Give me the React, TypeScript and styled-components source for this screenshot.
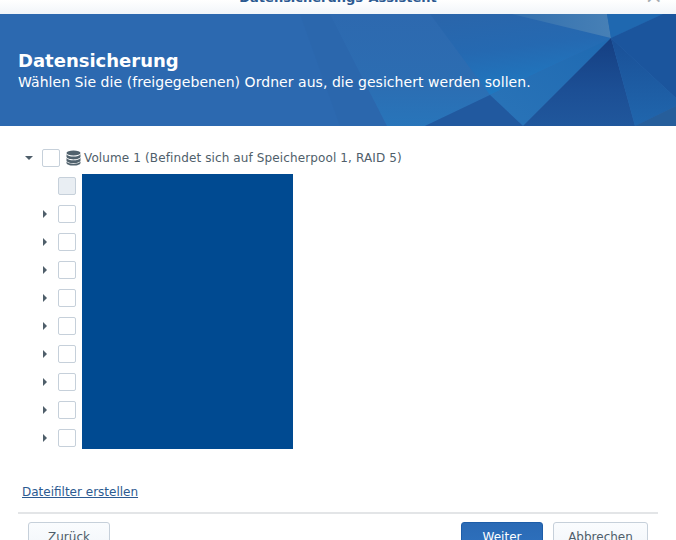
import React from 'react';
import styled, { createGlobalStyle } from 'styled-components';

const FOLDER_ROWS = 9;

const GlobalStyle = createGlobalStyle`
  html, body {
    margin: 0;
    padding: 0;
    background: #fff;
  }
  body {
    width: 676px;
    height: 540px;
    overflow: hidden;
    font-family: "DejaVu Sans", Verdana, sans-serif;
  }
`;

const BannerArt = () => (
  <ArtSvg viewBox="0 0 676 112">
    <defs>
      <linearGradient id="bright" x1="0" y1="0" x2="0.3" y2="1">
        <stop offset="0" stopColor="#2a65aa" />
        <stop offset="0.5" stopColor="#2569b1" />
        <stop offset="1" stopColor="#1f78c0" />
      </linearGradient>
      <linearGradient id="middle" x1="0" y1="0" x2="0" y2="1">
        <stop offset="0" stopColor="#2d69af" />
        <stop offset="0.6" stopColor="#2c6db2" />
        <stop offset="1" stopColor="#2875ba" />
      </linearGradient>
      <linearGradient id="light" x1="0" y1="0" x2="1" y2="0">
        <stop offset="0" stopColor="#3370ae" />
        <stop offset="1" stopColor="#4780b6" />
      </linearGradient>
      <linearGradient id="dark" x1="0" y1="0" x2="0" y2="1">
        <stop offset="0" stopColor="#153f82" />
        <stop offset="0.6" stopColor="#1c4f95" />
        <stop offset="1" stopColor="#20579c" />
      </linearGradient>
      <linearGradient id="side" x1="0" y1="0" x2="0" y2="1">
        <stop offset="0" stopColor="#1a5097" />
        <stop offset="1" stopColor="#2066ad" />
      </linearGradient>
      <linearGradient id="edge" x1="1" y1="0" x2="0" y2="1">
        <stop offset="0" stopColor="#1f6ab2" />
        <stop offset="1" stopColor="#2a74b8" />
      </linearGradient>
    </defs>
    <polygon points="300,0 330,0 387,112 340,112" fill="#2b67ad" />
    <polygon points="330,0 430,0 490,81 425,112 387,112" fill="url(#middle)" />
    <polygon points="430,0 512,0 611,24 490,81" fill="url(#bright)" />
    <polygon points="512,0 607,0 611,24" fill="url(#light)" />
    <polygon points="607,0 663,0 611,24" fill="#1f68b0" />
    <polygon points="663,0 676,0 676,84 611,24" fill="#1b559d" />
    <polygon points="490,81 611,24 523,112" fill="url(#edge)" />
    <polygon points="490,81 523,112 425,112" fill="#21599f" />
    <polygon points="611,24 635,112 523,112" fill="url(#dark)" />
    <polygon points="611,24 676,84 676,92 635,112" fill="url(#side)" />
    <polygon points="635,112 676,92 676,112" fill="#265e9b" />
  </ArtSvg>
);

const DatabaseIcon = () => (
  <svg width="15" height="16" viewBox="0 0 15 16">
    <ellipse cx="7.5" cy="3" rx="7" ry="2.6" fill="#51626d" />
    <path d="M.5 4.2c1 1.6 3.6 2.3 7 2.3s6-.7 7-2.3v2.6c0 1.4-3.1 2.6-7 2.6s-7-1.2-7-2.6z" fill="#51626d" />
    <path d="M.5 8c1 1.6 3.6 2.3 7 2.3s6-.7 7-2.3v2.4c0 1.4-3.1 2.6-7 2.6s-7-1.2-7-2.6z" fill="#51626d" />
    <path d="M.5 11.6c1 1.4 3.6 2.2 7 2.2s6-.8 7-2.2V13c0 1.4-3.1 2.6-7 2.6S.5 14.4.5 13z" fill="#51626d" />
  </svg>
);

const App = () => (
  <>
    <GlobalStyle />
    <Dialog>
      <TitleBar>
        <Title>Datensicherungs-Assistent</Title>
        <CloseMark>×</CloseMark>
      </TitleBar>
      <Banner>
        <BannerArt />
        <BannerTitle>Datensicherung</BannerTitle>
        <BannerText>
          Wählen Sie die (freigegebenen) Ordner aus, die gesichert werden sollen.
        </BannerText>
      </Banner>
      <Content>
        <Tree>
          <RootRow>
            <ArrowDown />
            <Check />
            <DatabaseIcon />
            <RootLabel>Volume 1 (Befindet sich auf Speicherpool 1, RAID 5)</RootLabel>
          </RootRow>
          <Folders>
            <FolderColumn>
              <FolderRow>
                <Check $disabled />
              </FolderRow>
              {Array.from({ length: FOLDER_ROWS }).map((_, i) => (
                <FolderRow key={i}>
                  <ArrowRight />
                  <Check />
                </FolderRow>
              ))}
            </FolderColumn>
            <Redacted />
          </Folders>
        </Tree>
        <FilterLink href="#">Dateifilter erstellen</FilterLink>
        <Footer>
          <Button>Zurück</Button>
          <FooterRight>
            <Button $primary>Weiter</Button>
            <Button $wide>Abbrechen</Button>
          </FooterRight>
        </Footer>
      </Content>
    </Dialog>
  </>
);

const Dialog = styled.div`
  width: 676px;
  height: 540px;
  overflow: hidden;
  display: flex;
  flex-direction: column;
`;

const TitleBar = styled.div`
  height: 14px;
  flex: none;
  position: relative;
  overflow: hidden;
  background: linear-gradient(#fff, #f1f5f9);
  display: flex;
  justify-content: center;
`;

const Title = styled.div`
  margin-top: -11px;
  font-size: 13px;
  line-height: 18px;
  font-weight: bold;
  color: #2c5a91;
`;

const CloseMark = styled.span`
  position: absolute;
  right: 13px;
  top: -14px;
  font-size: 22px;
  line-height: 20px;
  color: #a4abb2;
`;

const Banner = styled.div`
  height: 112px;
  flex: none;
  position: relative;
  overflow: hidden;
  box-sizing: border-box;
  padding: 36px 0 0 18px;
  background: #2c69b0;
  color: #fff;
`;

const ArtSvg = styled.svg`
  position: absolute;
  left: 0;
  top: 0;
  width: 676px;
  height: 112px;
`;

const BannerTitle = styled.div`
  position: relative;
  font-size: 18px;
  line-height: 22px;
  font-weight: bold;
`;

const BannerText = styled.div`
  position: relative;
  font-size: 14px;
  line-height: 20px;
  letter-spacing: 0.05px;
  white-space: nowrap;
`;

const Content = styled.div`
  flex: 1;
  display: flex;
  flex-direction: column;
  padding: 0 18px;
`;

const Tree = styled.div`
  padding: 23px 0 0 4px;
  height: 358px;
  box-sizing: border-box;
`;

const RootRow = styled.div`
  height: 18px;
  display: flex;
  align-items: center;
`;

const RootLabel = styled.span`
  margin: 0 0 1px 3px;
  font-size: 12px;
  letter-spacing: 0.12px;
  color: #4f5e6a;
  white-space: nowrap;
`;

const Folders = styled.div`
  display: flex;
  margin-top: 7px;
`;

const FolderColumn = styled.div`
  width: 60px;
  margin-top: -2px;
  padding-left: 16px;
  box-sizing: border-box;
`;

const FolderRow = styled.div`
  height: 28px;
  display: flex;
  align-items: center;
  justify-content: flex-end;
  padding-right: 6px;
  box-sizing: border-box;
  gap: 11px;
`;

const Redacted = styled.div`
  width: 211px;
  height: 275px;
  background: #004a91;
`;

const ArrowDown = styled.span`
  width: 0;
  height: 0;
  margin: 0 9px 0 3px;
  border-left: 4px solid transparent;
  border-right: 4px solid transparent;
  border-top: 4px solid #4f5e6a;
`;

const ArrowRight = styled.span`
  width: 0;
  height: 0;
  border-top: 4px solid transparent;
  border-bottom: 4px solid transparent;
  border-left: 4px solid #4f5e6a;
`;

const Check = styled.span<{ $disabled?: boolean }>`
  width: 18px;
  height: 18px;
  box-sizing: border-box;
  flex: none;
  border: 1px solid #c6d0da;
  border-radius: 2px;
  margin-right: 6px;
  background: ${({ $disabled }) => ($disabled ? '#e9eef3' : '#fff')};
  ${FolderRow} & {
    margin-right: 0;
  }
`;

const FilterLink = styled.a`
  margin-left: 4px;
  align-self: flex-start;
  font-size: 12px;
  line-height: 16px;
  color: #2c5a91;
  text-decoration: underline;
`;

const Footer = styled.div`
  margin-top: 12px;
  padding: 8px 10px 0 10px;
  border-top: 2px solid #e3e5e7;
  display: flex;
  justify-content: space-between;
`;

const FooterRight = styled.div`
  display: flex;
  gap: 10px;
`;

const Button = styled.button<{ $primary?: boolean; $wide?: boolean }>`
  width: ${({ $wide }) => ($wide ? '95px' : '82px')};
  height: 32px;
  padding: 0 0 2px;
  font-family: inherit;
  font-size: 12px;
  border-radius: 3px;
  border: 1px solid ${({ $primary }) => ($primary ? '#1d5da8' : '#c6d0da')};
  background: ${({ $primary }) =>
    $primary ? 'linear-gradient(#2a6ab5, #2f72bf)' : 'linear-gradient(#fafcfe, #f1f5f9)'};
  color: ${({ $primary }) => ($primary ? '#fff' : '#4f5e6a')};
`;

export default App;
